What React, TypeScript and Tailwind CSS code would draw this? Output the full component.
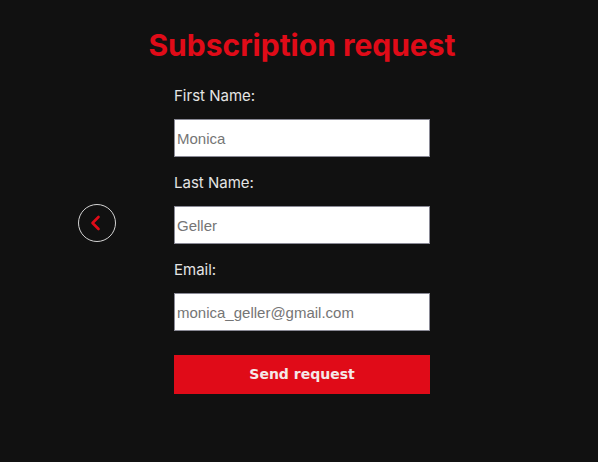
import { useState } from 'react'

const FIELDS = [
  { id: 'first', label: 'First Name:', placeholder: 'Monica' },
  { id: 'last', label: 'Last Name:', placeholder: 'Geller' },
  { id: 'email', label: 'Email:', placeholder: 'monica_geller@gmail.com' },
]

function BackButton() {
  return (
    <button
      type="button"
      className="flex h-[38px] w-[38px] items-center justify-center rounded-full border border-[#d4d4d4]"
    >
      <svg width="16" height="16" viewBox="0 0 16 16" fill="none" className="-ml-[3px]">
        <path d="M10.5 2 L4.5 8 L10.5 14" stroke="#e00b18" strokeWidth="2.6" strokeLinecap="round" strokeLinejoin="round" />
      </svg>
    </button>
  )
}

export default function App() {
  const [values, setValues] = useState<Record<string, string>>({})

  return (
    <div className="min-h-[462px] w-[598px] bg-[#111111] pl-[6px] pt-[25px] font-['Inter',sans-serif]">
      <h1 className="text-center text-[30px] font-bold leading-[40px] text-[#e00b18]">Subscription request</h1>

      <div className="mt-[21px] grid grid-cols-[1fr_256px_1fr]">
        <div className="pl-[72px] pt-[118px]">
          <BackButton />
        </div>

        <form className="flex flex-col" onSubmit={(e) => e.preventDefault()}>
          {FIELDS.map((f) => (
            <div key={f.id} className="mb-[16px] flex flex-col">
              <label htmlFor={f.id} className="text-[15px] leading-[20px] text-[#e5e5e5]">
                {f.label}
              </label>
              <input
                id={f.id}
                value={values[f.id] ?? ''}
                onChange={(e) => setValues({ ...values, [f.id]: e.target.value })}
                placeholder={f.placeholder}
                className="mt-[13px] h-[38px] w-[256px] border border-[#8a8a96] bg-white px-[2px] font-['Liberation_Sans',Arial,sans-serif] text-[15px] text-[#555] placeholder:text-[#757575] outline-none"
              />
            </div>
          ))}
          <button
            type="submit"
            className="mt-[8px] h-[39px] w-[256px] bg-[#e00b18] font-['DejaVu_Sans',sans-serif] text-[14px] font-bold text-[#f5e8e8]"
          >
            Send request
          </button>
        </form>
        <div />
      </div>
    </div>
  )
}
